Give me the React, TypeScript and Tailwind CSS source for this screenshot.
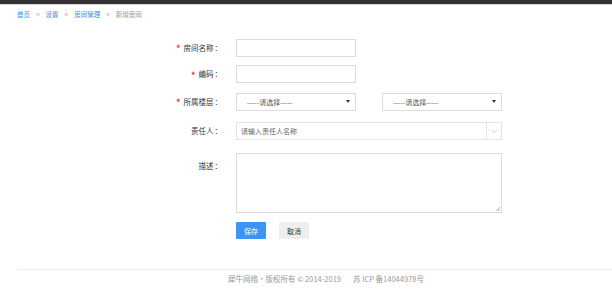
import React from "react";

const font = { fontFamily: '"Noto Sans CJK SC", "Noto Sans", sans-serif' };

function Label({ text, required }: { text: string; required?: boolean }) {
  return (
    <div className="w-[222px] shrink-0 text-right text-[7.5px] leading-[17px] text-[#333]">
      {required && <span className="mr-[3px] align-middle text-[9px] font-bold text-[#e4393c]">*</span>}
      {text}
      <span className="ml-[1px]">：</span>
    </div>
  );
}

function Select() {
  return (
    <div className="flex h-[18px] w-[120px] items-center justify-between border border-[#dcdcdc] bg-white pl-[10px] pr-[5px] text-[7px] text-[#555]">
      <span>-----请选择-----</span>
      <svg width="4" height="3" viewBox="0 0 4 3">
        <path d="M0 0 L4 0 L2 3 Z" fill="#333" />
      </svg>
    </div>
  );
}

export default function App() {
  return (
    <div className="relative h-[295px] w-[612px] overflow-hidden bg-white" style={font}>
      <div className="h-[4px] bg-[#333]" />
      <div className="h-[1px] bg-[#d5d5d5]" />
      <div className="flex items-center gap-[6px] pl-[17px] pt-[4px] text-[6.5px] leading-[10px]">
        <span className="text-[#3b8ee8]">首页</span>
        <span className="text-[#999]">&gt;</span>
        <span className="text-[#3b8ee8]">设置</span>
        <span className="text-[#999]">&gt;</span>
        <span className="text-[#3b8ee8]">房间管理</span>
        <span className="text-[#999]">&gt;</span>
        <span className="text-[#999]">新增房间</span>
      </div>

      <div className="flex flex-col pt-[20px]">
        <div className="flex items-start">
          <Label text="房间名称" required />
          <div className="ml-[14px] h-[18px] w-[120px] border border-[#dcdcdc] bg-white" />
        </div>
        <div className="mt-[8px] flex items-start">
          <Label text="编码" required />
          <div className="ml-[14px] h-[18px] w-[120px] border border-[#dcdcdc] bg-white" />
        </div>
        <div className="mt-[9px] flex items-start">
          <Label text="所属楼层" required />
          <div className="ml-[14px] flex gap-[26px]">
            <Select />
            <Select />
          </div>
        </div>
        <div className="mt-[11px] flex items-start">
          <Label text="责任人" />
          <div className="ml-[14px] flex h-[18px] w-[266px] items-center border border-[#e3e3e3] bg-white">
            <span className="flex-1 pl-[4px] text-[7px] text-[#666]">请输入责任人名称</span>
            <div className="flex h-full w-[15px] items-center justify-center border-l border-[#e3e3e3]">
              <svg width="7" height="4" viewBox="0 0 7 4" fill="none">
                <path d="M0.5 0.5 L3.5 3.5 L6.5 0.5" stroke="#c8c8c8" strokeWidth="0.8" />
              </svg>
            </div>
          </div>
        </div>
        <div className="mt-[13px] flex items-start">
          <div className="mt-[4px]">
            <Label text="描述" />
          </div>
          <div className="relative ml-[14px] h-[60px] w-[266px] border border-[#dcdcdc] bg-white">
            <svg className="absolute bottom-[1px] right-[1px]" width="5" height="5" viewBox="0 0 5 5">
              <path d="M1 5 L5 1 M3 5 L5 3" stroke="#999" strokeWidth="0.7" />
            </svg>
          </div>
        </div>
        <div className="ml-[236px] mt-[9px] flex gap-[13px]">
          <div className="flex h-[17px] w-[30px] items-center justify-center rounded-[1px] bg-[#3a95f5] text-[7px] text-white">
            保存
          </div>
          <div className="flex h-[17px] w-[30px] items-center justify-center rounded-[1px] bg-[#eeeeee] text-[7px] text-[#333]">
            取消
          </div>
        </div>
      </div>

      <div className="ml-[17px] mt-[30px] h-[1px] bg-[#eeeeee]" />
      <div className="flex pl-[228px] pt-[3px] text-[7.5px] leading-[12px] text-[#999]">
        <span>犀牛网络·版权所有 © 2014-2019</span>
        <span className="ml-[12px]">苏 ICP 备14044978号</span>
      </div>
    </div>
  );
}
